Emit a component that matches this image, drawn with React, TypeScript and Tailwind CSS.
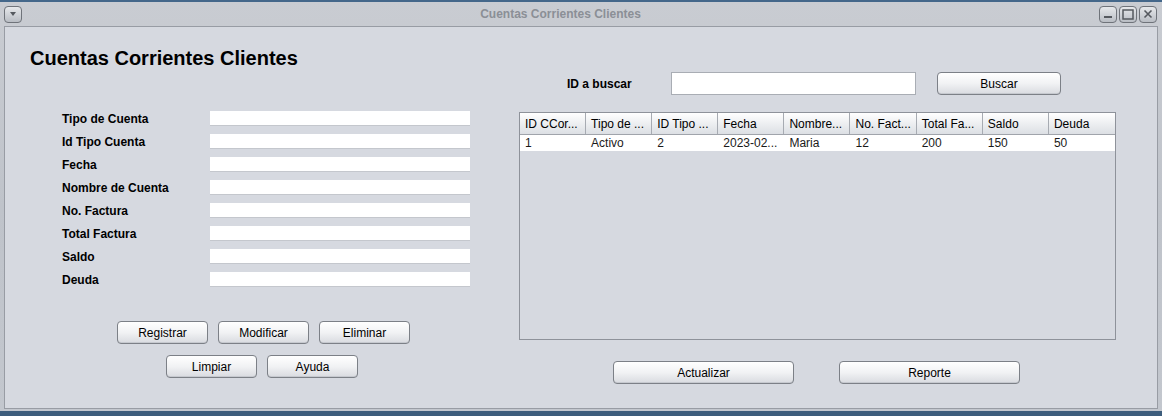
import React from 'react'

const fields = [
  'Tipo de Cuenta',
  'Id Tipo Cuenta',
  'Fecha',
  'Nombre de Cuenta',
  'No. Factura',
  'Total Factura',
  'Saldo',
  'Deuda',
]

const columns = ['ID CCor...', 'Tipo de ...', 'ID Tipo ...', 'Fecha', 'Nombre...', 'No. Fact...', 'Total Fa...', 'Saldo', 'Deuda']
const rows = [['1', 'Activo', '2', '2023-02...', 'Maria', '12', '200', '150', '50']]

const FONT = "font-['Liberation_Sans',Arial,sans-serif]"

function Button({ label, className }: { label: string; className?: string }) {
  return (
    <button
      className={`h-[23px] rounded-[4px] border border-[#7c8087] bg-gradient-to-b from-[#ffffff] via-[#f1f2f4] to-[#d9dbe0] text-[12px] text-black shadow-[inset_0_-1px_0_#c6c9cf] ${className ?? ''}`}
    >
      {label}
    </button>
  )
}

function WinButton({ children }: { children: React.ReactNode }) {
  return (
    <div className="flex h-[17px] w-[18px] items-center justify-center rounded-[4px] border border-[#6f737a] bg-gradient-to-b from-[#e6e8eb] to-[#b9bdc4] text-[#55595f]">
      {children}
    </div>
  )
}

export default function App() {
  return (
    <div className={`flex h-[416px] w-[1162px] flex-col bg-[#3d5d7c] ${FONT}`}>
      <div className="h-[2px] bg-[#44678a]" />
      {/* window frame */}
      <div className="flex h-[409px] flex-col bg-gradient-to-b from-[#c9ccd2] via-[#bfc3ca] to-[#c3c7ce] px-[4px] pb-[2px]">
        {/* title bar */}
        <div className="flex h-[24px] items-center">
          <WinButton>
            <svg width="8" height="6" viewBox="0 0 8 6">
              <path d="M1 1h6L4 5z" fill="#55595f" />
            </svg>
          </WinButton>
          <div className="flex-1 text-center text-[12px] font-bold text-[#8b8f96]">Cuentas Corrientes Clientes</div>
          <div className="flex gap-[2px] pr-[1px]">
            <WinButton>
              <svg width="10" height="10" viewBox="0 0 10 10">
                <rect x="1" y="7" width="8" height="2" fill="#55595f" />
              </svg>
            </WinButton>
            <WinButton>
              <svg width="12" height="11" viewBox="0 0 12 11">
                <rect x="1" y="1" width="10" height="9" fill="none" stroke="#55595f" strokeWidth="1.5" />
              </svg>
            </WinButton>
            <WinButton>
              <svg width="10" height="10" viewBox="0 0 10 10">
                <path d="M1.5 1.5l7 7M8.5 1.5l-7 7" stroke="#55595f" strokeWidth="1.6" />
              </svg>
            </WinButton>
          </div>
        </div>

        {/* content panel */}
        <div className="flex flex-1 border border-[#989ca4] bg-[#d6d9e0]">
          {/* left side */}
          <div className="flex w-[505px] flex-col">
            <h1 className="ml-[25px] mt-[19px] text-[20px] font-bold leading-[24px] text-black">Cuentas Corrientes Clientes</h1>
            <div className="ml-[57px] mt-[37px] flex flex-col">
              {fields.map((f) => (
                <div key={f} className="flex h-[23px] items-center">
                  <span className="w-[148px] text-[12px] font-bold text-black">{f}</span>
                  <div className="h-[15px] w-[260px] border-b border-[#c4c7cd] bg-white" />
                </div>
              ))}
            </div>
            <div className="ml-[112px] mt-[30px] flex gap-[10px]">
              <Button label="Registrar" className="w-[91px]" />
              <Button label="Modificar" className="w-[91px]" />
              <Button label="Eliminar" className="w-[91px]" />
            </div>
            <div className="ml-[161px] mt-[11px] flex gap-[10px]">
              <Button label="Limpiar" className="w-[91px]" />
              <Button label="Ayuda" className="w-[91px]" />
            </div>
          </div>

          {/* right side */}
          <div className="flex flex-1 flex-col">
            <div className="mt-[45px] flex h-[23px] items-center">
              <span className="ml-[57px] w-[104px] text-[12px] font-bold text-black">ID a buscar</span>
              <div className="h-[23px] w-[245px] border border-[#a9adb4] bg-white" />
              <Button label="Buscar" className="ml-[21px] w-[124px]" />
            </div>

            <div className="ml-[9px] mt-[17px] flex h-[228px] w-[597px] flex-col border border-[#8e929a] bg-[#d6d9e0]">
              <div className="flex h-[22px] border-b border-[#a0a4ab] bg-gradient-to-b from-[#ffffff] to-[#dcdfe4]">
                {columns.map((c, i) => (
                  <div
                    key={c}
                    className={`flex h-full w-[66.3px] items-center px-[5px] text-[12px] text-black ${i < columns.length - 1 ? 'border-r border-[#a7abb2]' : ''}`}
                  >
                    <span className="whitespace-nowrap">{c}</span>
                  </div>
                ))}
              </div>
              {rows.map((r, ri) => (
                <div key={ri} className="flex h-[16px] bg-white">
                  {r.map((v, i) => (
                    <div key={i} className="flex w-[66.3px] items-center px-[5px] text-[12px] text-[#1a1a1a]">
                      {v}
                    </div>
                  ))}
                </div>
              ))}
            </div>

            <div className="mt-[21px] flex">
              <Button label="Actualizar" className="ml-[103px] w-[181px]" />
              <Button label="Reporte" className="ml-[45px] w-[181px]" />
            </div>
          </div>
        </div>
      </div>
    </div>
  )
}
